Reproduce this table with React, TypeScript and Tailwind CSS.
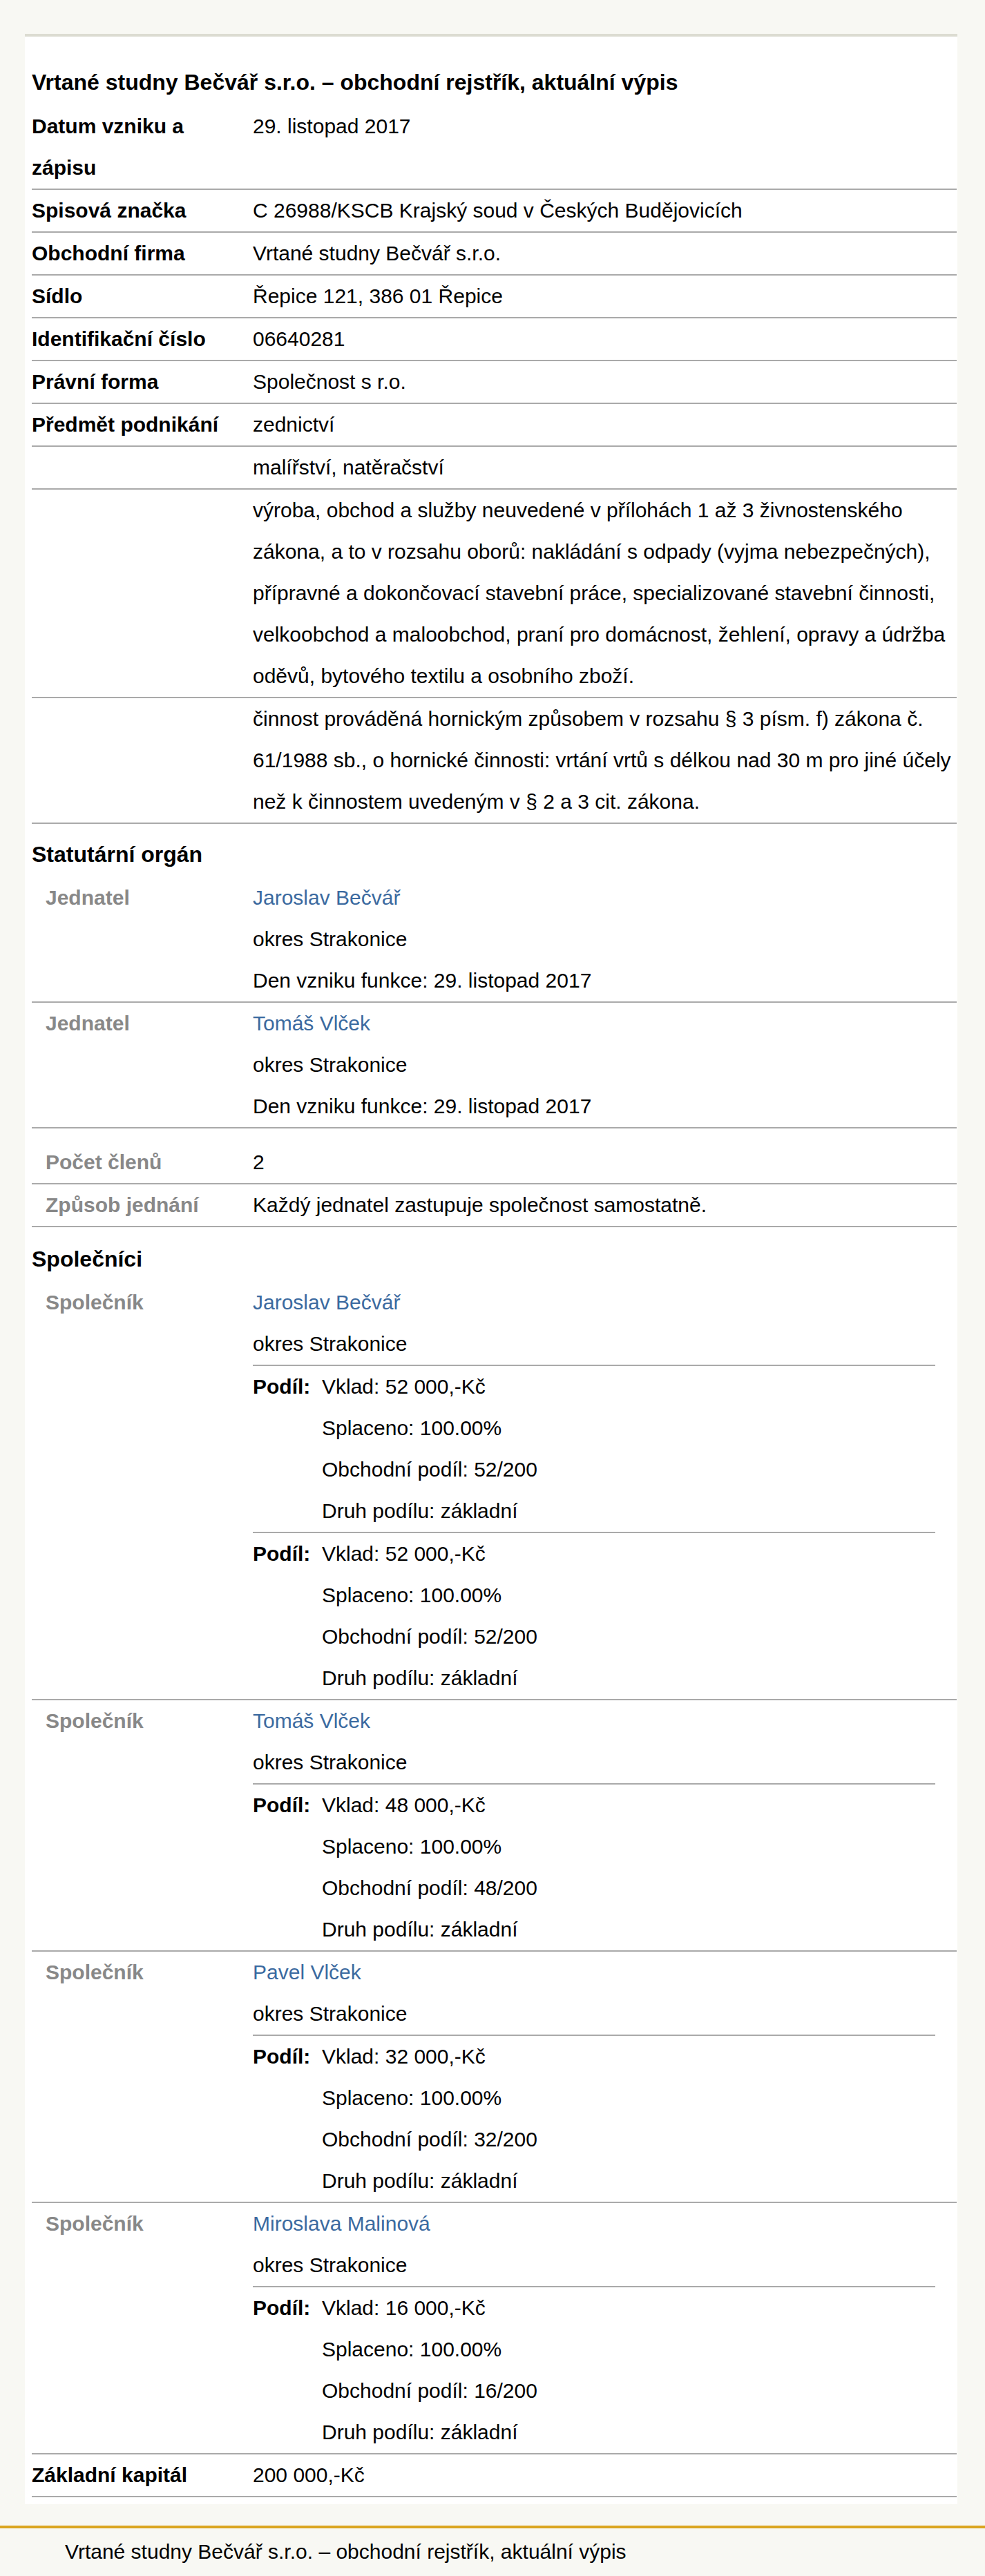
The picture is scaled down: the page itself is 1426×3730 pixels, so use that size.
import React from "react";

const FONT = { fontFamily: '"Liberation Sans", Arial, sans-serif' };

function Row({ label, children, sub = false }: { label?: string; children: React.ReactNode; sub?: boolean }) {
  return (
    <div className="flex border-b-2 border-[#aaaaaa]">
      <div
        className={
          sub
            ? "w-[320px] shrink-0 pl-[20px] pr-[10px] font-bold text-[#888888]"
            : "w-[320px] shrink-0 pr-[10px] font-bold text-black"
        }
      >
        {label}
      </div>
      <div className="flex-1 min-w-0">{children}</div>
    </div>
  );
}

type Podil = { vklad: string; podil: string };
type Spolecnik = { name: string; podily: Podil[] };

const spolecnici: Spolecnik[] = [
  {
    name: "Jaroslav Bečvář",
    podily: [
      { vklad: "52 000,-Kč", podil: "52/200" },
      { vklad: "52 000,-Kč", podil: "52/200" },
    ],
  },
  { name: "Tomáš Vlček", podily: [{ vklad: "48 000,-Kč", podil: "48/200" }] },
  { name: "Pavel Vlček", podily: [{ vklad: "32 000,-Kč", podil: "32/200" }] },
  { name: "Miroslava Malinová", podily: [{ vklad: "16 000,-Kč", podil: "16/200" }] },
];

export default function App() {
  return (
    <div className="min-h-[3730px] bg-[#f8f8f3] text-black" style={FONT}>
      <div className="pt-[49px]">
        <div className="ml-[36px] w-[1350px] border-t-4 border-[#dcdcd1] bg-white pl-[10px] pr-[1px] pt-[34px] pb-[10px] text-[30px] leading-[60px]">
          <div className="mb-[2px] text-[32px] font-bold leading-[64px]">
            Vrtané studny Bečvář s.r.o. – obchodní rejstřík, aktuální výpis
          </div>

          <Row label="Datum vzniku a zápisu">29. listopad 2017</Row>
          <Row label="Spisová značka">C 26988/KSCB Krajský soud v Českých Budějovicích</Row>
          <Row label="Obchodní firma">Vrtané studny Bečvář s.r.o.</Row>
          <Row label="Sídlo">Řepice 121, 386 01 Řepice</Row>
          <Row label="Identifikační číslo">06640281</Row>
          <Row label="Právní forma">Společnost s r.o.</Row>
          <Row label="Předmět podnikání">zednictví</Row>
          <Row>malířství, natěračství</Row>
          <Row>
            výroba, obchod a služby neuvedené v přílohách 1 až 3 živnostenského zákona, a to v rozsahu oborů:
            nakládání s odpady (vyjma nebezpečných), přípravné a dokončovací stavební práce, specializované
            stavební činnosti, velkoobchod a maloobchod, praní pro domácnost, žehlení, opravy a údržba oděvů,
            bytového textilu a osobního zboží.
          </Row>
          <Row>
            činnost prováděná hornickým způsobem v rozsahu § 3 písm. f) zákona č. 61/1988 sb., o hornické
            činnosti: vrtání vrtů s délkou nad 30 m pro jiné účely než k činnostem uvedeným v § 2 a 3 cit. zákona.
          </Row>

          <div className="pt-[12px] pb-[1px] text-[32px] font-bold leading-[64px]">Statutární orgán</div>
          <Row label="Jednatel" sub>
            <div className="text-[#3b6aa0]">Jaroslav Bečvář</div>
            <div>okres Strakonice</div>
            <div>Den vzniku funkce: 29. listopad 2017</div>
          </Row>
          <Row label="Jednatel" sub>
            <div className="text-[#3b6aa0]">Tomáš Vlček</div>
            <div>okres Strakonice</div>
            <div>Den vzniku funkce: 29. listopad 2017</div>
          </Row>
          <div className="h-[19px]" />
          <Row label="Počet členů" sub>
            2
          </Row>
          <Row label="Způsob jednání" sub>
            Každý jednatel zastupuje společnost samostatně.
          </Row>

          <div className="pt-[14px] pb-[1px] text-[32px] font-bold leading-[64px]">Společníci</div>
          {spolecnici.map((s, i) => (
            <Row key={i} label="Společník" sub>
              <div className="text-[#3b6aa0]">{s.name}</div>
              <div>okres Strakonice</div>
              {s.podily.map((p, j) => (
                <div key={j} className="mr-[31px] flex border-t-2 border-[#aaaaaa]">
                  <div className="w-[100px] shrink-0 font-bold">Podíl:</div>
                  <div className="flex-1">
                    <div>Vklad: {p.vklad}</div>
                    <div>Splaceno: 100.00%</div>
                    <div>Obchodní podíl: {p.podil}</div>
                    <div>Druh podílu: základní</div>
                  </div>
                </div>
              ))}
            </Row>
          ))}
          <Row label="Základní kapitál">200 000,-Kč</Row>
        </div>

        <div className="mt-[31px] border-t-4 border-[#daa520] pl-[94px] pt-[4px] pb-[5px] text-[30px] leading-[60px]">
          Vrtané studny Bečvář s.r.o. – obchodní rejstřík, aktuální výpis
        </div>
      </div>
    </div>
  );
}
